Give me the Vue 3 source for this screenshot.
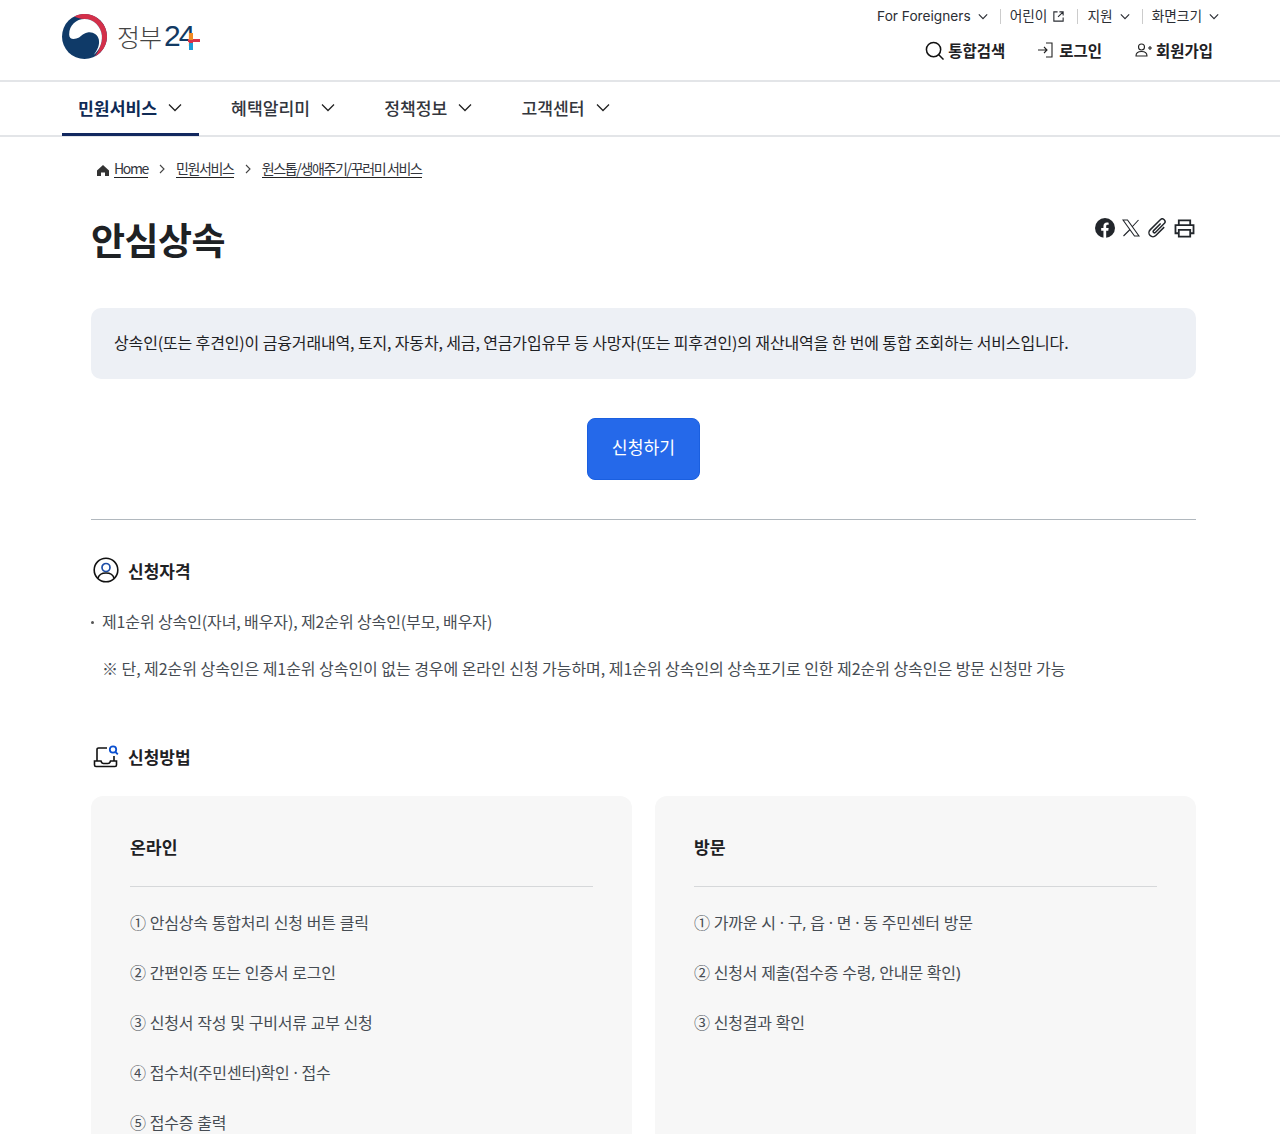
<template>
  <div class="page">
    <header class="top">
      <a class="logo">
        <svg class="mark" width="45" height="45" viewBox="0 0 44 44">
          <circle cx="22" cy="22" r="22" fill="#0f3a68" />
          <path d="M12 2.400A22 22 0 0 1 32 41.600C36 36 39.500 29 39 21 38 12 31 5 22 5 17 5 14 3 12 2.400z" fill="#d3304a" />
          <path d="M7 20C7 11 14 5 22 5c9 0 16 7 17 16 .5 8-3 15-8 19 4-5 6-10 5-15-1-5-6-8-11-7-5 1-7 5-11 6-4 1-7 0-7-4z" fill="#fff" />
        </svg>
        <span class="logo-ko">정부</span>
        <span class="logo-num">24<i class="plus-h"></i><i class="plus-v"></i></span>
      </a>
      <div class="utils">
        <div class="util-top">
          <span class="ut">For Foreigners <svg class="chev-s" viewBox="0 0 12 8"><path d="M1 1.500l5 5 5-5" /></svg></span>
          <span class="ut sep">어린이 <svg class="ext" viewBox="0 0 14 14"><path d="M6 2H2v10h10V8M8 2h4v4M12 2L6.500 7.500" /></svg></span>
          <span class="ut sep">지원 <svg class="chev-s" viewBox="0 0 12 8"><path d="M1 1.500l5 5 5-5" /></svg></span>
          <span class="ut sep">화면크기 <svg class="chev-s" viewBox="0 0 12 8"><path d="M1 1.500l5 5 5-5" /></svg></span>
        </div>
        <div class="util-main">
          <span class="um">
            <svg width="19" height="19" viewBox="0 0 20 20" fill="none" stroke="#111" stroke-width="1.600"><circle cx="9" cy="9" r="7.500" /><path d="M14.500 14.500l5 5" /></svg>
            통합검색
          </span>
          <span class="um um-login">
            <svg width="16" height="16" viewBox="0 0 16 16" fill="none" stroke="#222" stroke-width="1.100"><path d="M9 1h6v14H9M1 8h9M7 5l3 3-3 3" /></svg>
            로그인
          </span>
          <span class="um">
            <svg width="17" height="14" viewBox="0 0 17 14" fill="none" stroke="#222" stroke-width="1.100"><circle cx="6.500" cy="4" r="3" /><path d="M1 13c0-3 2-4.500 5.500-4.500S12 10 12 13zM13 5h4M15 3v4" /></svg>
            회원가입
          </span>
        </div>
      </div>
    </header>

    <nav class="gnb">
      <a v-for="(m, i) in menus" :key="m" class="gnb-item" :class="{ on: i === 0 }">
        {{ m }}
        <svg width="14" height="9" viewBox="0 0 14 9" fill="none" stroke="#222" stroke-width="1.300"><path d="M1 1.500l6 6 6-6" /></svg>
      </a>
    </nav>

    <main class="content">
      <div class="crumbs">
        <svg class="home" width="12" height="11" viewBox="0 0 12 11"><path d="M6 0L0 5.500V11h4V7.500h4V11h4V5.500z" fill="#333" /></svg>
        <a>Home</a>
        <svg class="gt" viewBox="0 0 6 10"><path d="M1 1l4 4-4 4" /></svg>
        <a>민원서비스</a>
        <svg class="gt" viewBox="0 0 6 10"><path d="M1 1l4 4-4 4" /></svg>
        <a>원스톱/생애주기/꾸러미 서비스</a>
      </div>

      <div class="title-row">
        <h1>안심상속</h1>
        <div class="share">
          <svg width="20" height="20" viewBox="0 0 22 22"><circle cx="11" cy="11" r="11" fill="#22262b" /><path d="M9.300 22v-8H6.800v-3h2.500V8.800c0-2.500 1.500-3.900 3.700-3.900 1 0 2 .2 2 .2v2.400h-1.100c-1.200 0-1.600.7-1.600 1.500V11h2.700l-.4 3h-2.300v8z" fill="#fff" /></svg>
          <svg width="18" height="18" viewBox="0 0 18 18" fill="none" stroke="#22262b" stroke-width="1.100"><path d="M1 1h4.500l11.500 16h-4.500zM16.500 1L10 8M8 10.500L1.500 17" /></svg>
          <svg class="clip" width="20" height="20" viewBox="2 2 16 16" fill="none" stroke="#22262b" stroke-width="1.200"><g transform="rotate(45 10 10)"><path d="M13 6v9.500a3.200 3.200 0 0 1-6.400 0V4a2.200 2.200 0 0 1 4.400 0v10a1 1 0 0 1-2 0V6" /></g></svg>
          <svg width="21" height="19" viewBox="0 0 22 20" fill="none" stroke="#22262b" stroke-width="1.900"><path d="M5 6V1.500h12V6M5 15H1.500V6.500h19V15H17M5 11.500h12v7H5z" /></svg>
        </div>
      </div>

      <p class="summary">상속인(또는 후견인)이 금융거래내역, 토지, 자동차, 세금, 연금가입유무 등 사망자(또는 피후견인)의 재산내역을 한 번에 통합 조회하는 서비스입니다.</p>

      <div class="apply-wrap"><button class="apply">신청하기</button></div>

      <section class="qualify">
        <h2>
          <svg width="26" height="26" viewBox="0 0 26 26" fill="none"><circle cx="13" cy="13" r="11.800" stroke="#111" stroke-width="1.600" /><circle cx="13" cy="10.500" r="4" stroke="#1d4ea8" stroke-width="1.700" /><path d="M5 21c1-3.500 4-5 8-5s7 1.500 8 5" stroke="#111" stroke-width="1.600" /></svg>
          신청자격
        </h2>
        <p class="bullet">제1순위 상속인(자녀, 배우자), 제2순위 상속인(부모, 배우자)</p>
        <p class="note">※ 단, 제2순위 상속인은 제1순위 상속인이 없는 경우에 온라인 신청 가능하며, 제1순위 상속인의 상속포기로 인한 제2순위 상속인은 방문 신청만 가능</p>
      </section>

      <section class="method">
        <h2>
          <svg width="26" height="24" viewBox="0 -1 26 24" fill="none"><path d="M14 3H5.500A1.500 1.500 0 0 0 4 4.500V16M21 11v5" stroke="#111" stroke-width="1.600" /><path d="M2.500 16H8c.5 2 1.500 2.500 2.500 2.500H15c1 0 2-.5 2.500-2.500H23.500v4a1.500 1.500 0 0 1-1.500 1.500H3A1.500 1.500 0 0 1 1.500 20v-4z" stroke="#111" stroke-width="1.600" /><circle cx="20" cy="4.500" r="3.200" stroke="#0b50d0" stroke-width="1.800" /><path d="M22.500 7l2.300 2.300" stroke="#0b50d0" stroke-width="1.800" /></svg>
          신청방법
        </h2>
        <div class="cards">
          <div v-for="c in cards" :key="c.title" class="card">
            <h3>{{ c.title }}</h3>
            <ul>
              <li v-for="s in c.steps" :key="s">{{ s }}</li>
            </ul>
          </div>
        </div>
      </section>
    </main>
  </div>
</template>

<script setup>
const menus = ["민원서비스", "혜택알리미", "정책정보", "고객센터"];

const cards = [
  {
    title: "온라인",
    steps: [
      "① 안심상속 통합처리 신청 버튼 클릭",
      "② 간편인증 또는 인증서 로그인",
      "③ 신청서 작성 및 구비서류 교부 신청",
      "④ 접수처(주민센터)확인 · 접수",
      "⑤ 접수증 출력",
    ],
  },
  {
    title: "방문",
    steps: [
      "① 가까운 시 · 구, 읍 · 면 · 동 주민센터 방문",
      "② 신청서 제출(접수증 수령, 안내문 확인)",
      "③ 신청결과 확인",
    ],
  },
];
</script>

<style>
html,
body {
  margin: 0;
  overflow: hidden;
  background: #fff;
}
</style>

<style scoped>
.page {
  font-family: "Noto Sans CJK KR", "Noto Sans", sans-serif;
  color: #1e2124;
  height: 1134px;
  overflow: hidden;
}

.top {
  height: 80px;
  padding: 0 61px 0 62px;
  display: flex;
  justify-content: space-between;
  border-bottom: 2px solid #e3e5e8;
}

.logo {
  display: flex;
  align-items: center;
  height: 72px;
}

.logo-ko {
  margin-left: 10px;
  font-size: 25px;
  font-weight: 300;
  color: #444;
  letter-spacing: -1px;
}

.logo-num {
  position: relative;
  margin-left: 3px;
  font-family: "Liberation Sans", sans-serif;
  font-size: 30px;
  color: #123a63;
  letter-spacing: -2px;
  line-height: 1;
}

.plus-h {
  position: absolute;
  left: 24px;
  top: 18px;
  width: 12px;
  height: 3px;
  background: #d9324a;
}

.plus-v {
  position: absolute;
  left: 25px;
  top: 12px;
  width: 4px;
  height: 17px;
  background: linear-gradient(#f08a24 40%, #d9324a 40% 58%, #1e9ad6 58%);
}

.utils {
  display: flex;
  flex-direction: column;
  align-items: flex-end;
}

.util-top {
  display: flex;
  align-items: center;
  height: 32px;
  font-family: "Inter", "Noto Sans CJK KR", sans-serif;
  font-size: 13.700px;
  color: #2b2e34;
}

.ut {
  display: flex;
  align-items: center;
  gap: 5px;
  line-height: 15px;
}

.sep {
  margin-left: 12px;
  padding-left: 9px;
  border-left: 1px solid #ccc;
}

.chev-s {
  width: 10px;
  height: 7px;
  margin-left: 2px;
  fill: none;
  stroke: #2b2e34;
  stroke-width: 1.400;
}

.ext {
  width: 13px;
  height: 13px;
  fill: none;
  stroke: #2b2e34;
  stroke-width: 1.200;
}

.util-main {
  display: flex;
  gap: 32px;
  margin-top: 4px;
  padding-right: 6px;
}

.um {
  display: flex;
  align-items: center;
  gap: 4px;
  font-size: 15.500px;
  font-weight: 700;
  color: #1e2124;
  line-height: 28px;
}

.um-login {
  gap: 6px;
  margin-right: 1px;
}

.gnb {
  height: 53px;
  padding-left: 62px;
  display: flex;
  border-bottom: 2px solid #e3e5e8;
}

.gnb-item {
  display: flex;
  align-items: center;
  gap: 11px;
  height: 53px;
  padding: 0 17px 2px 16px;
  margin-right: 16px;
  font-size: 17.200px;
  font-weight: 500;
  color: #33363d;
  box-sizing: border-box;
}

.gnb-item.on {
  color: #0f2a55;
  font-weight: 700;
  border-bottom: 3px solid #12285f;
  height: 54px;
  padding-bottom: 0;
}

.content {
  width: 1105px;
  margin-left: 91px;
}

.crumbs {
  display: flex;
  align-items: center;
  gap: 6px;
  padding: 22px 0 0 5px;
  height: 20px;
  font-size: 14px;
  letter-spacing: -1.350px;
  color: #33363d;
}

.crumbs a {
  line-height: 17px;
  border-bottom: 1px solid #222;
}

.home {
  margin: 2px -1px 0 1px;
}

.gt {
  width: 6px;
  height: 10px;
  margin: 0 5px;
  fill: none;
  stroke: #444;
  stroke-width: 1.100;
}

.title-row {
  display: flex;
  justify-content: space-between;
  margin-top: 32px;
  height: 97px;
}

h1 {
  margin: 0;
  font-size: 37px;
  font-weight: 700;
  line-height: 56px;
  letter-spacing: -0.5px;
  color: #1e2124;
}

.share {
  display: flex;
  align-items: center;
  gap: 7px;
  height: 24px;
  margin-top: 5px;
  padding-right: 1px;
}

.clip {
  margin: 0 -1px 0 1px;
}

.summary {
  margin: 0;
  height: 71px;
  box-sizing: border-box;
  padding: 0 23px;
  line-height: 69px;
  font-size: 16px;
  letter-spacing: -0.140px;
  background: #edf0f5;
  border-radius: 10px;
  color: #1e2124;
}

.apply-wrap {
  display: flex;
  justify-content: center;
  padding: 39px 0 39px;
  border-bottom: 1px solid #b1b8be;
}

.apply {
  width: 113px;
  height: 62px;
  padding: 0 0 5px;
  border: 1px solid #1a5fe0;
  border-radius: 8px;
  background: #2569ea;
  color: #fff;
  font-family: inherit;
  font-size: 17.200px;
}

h2 {
  display: flex;
  align-items: center;
  gap: 9px;
  margin: 0;
  padding-left: 2px;
  font-size: 17px;
  font-weight: 700;
  color: #1e2124;
}

.qualify {
  padding-top: 35px;
}

.qualify h2 {
  height: 30px;
}

.bullet,
.note {
  margin: 0;
  font-size: 16px;
  line-height: 24px;
  color: #464c53;
}

.bullet {
  position: relative;
  margin-top: 24px;
  padding-left: 11px;
  letter-spacing: -0.120px;
}

.bullet::before {
  content: "";
  position: absolute;
  left: 0;
  top: 12px;
  width: 3px;
  height: 3px;
  border-radius: 50%;
  background: #555;
}

.note {
  margin-top: 23px;
  padding-left: 11px;
  letter-spacing: -0.050px;
}

.method {
  padding-top: 61px;
}

.method h2 {
  height: 30px;
}

.cards {
  display: grid;
  grid-template-columns: 541px 541px;
  gap: 23px;
  margin-top: 25px;
}

.card {
  background: #f7f7f7;
  border-radius: 12px;
  padding: 32px 39px;
  min-height: 500px;
}

h3 {
  margin: 0;
  font-size: 17.200px;
  font-weight: 700;
  line-height: 38px;
  border-bottom: 1px solid #d6d8da;
  height: 59px;
  box-sizing: border-box;
  color: #1e2124;
}

ul {
  list-style: none;
  margin: 12px 0 0;
  padding: 0;
}

li {
  font-family: "Noto Sans", "Noto Sans CJK KR", sans-serif;
  font-size: 16px;
  line-height: 49.900px;
  color: #464c53;
  letter-spacing: -0.210px;
}
</style>
